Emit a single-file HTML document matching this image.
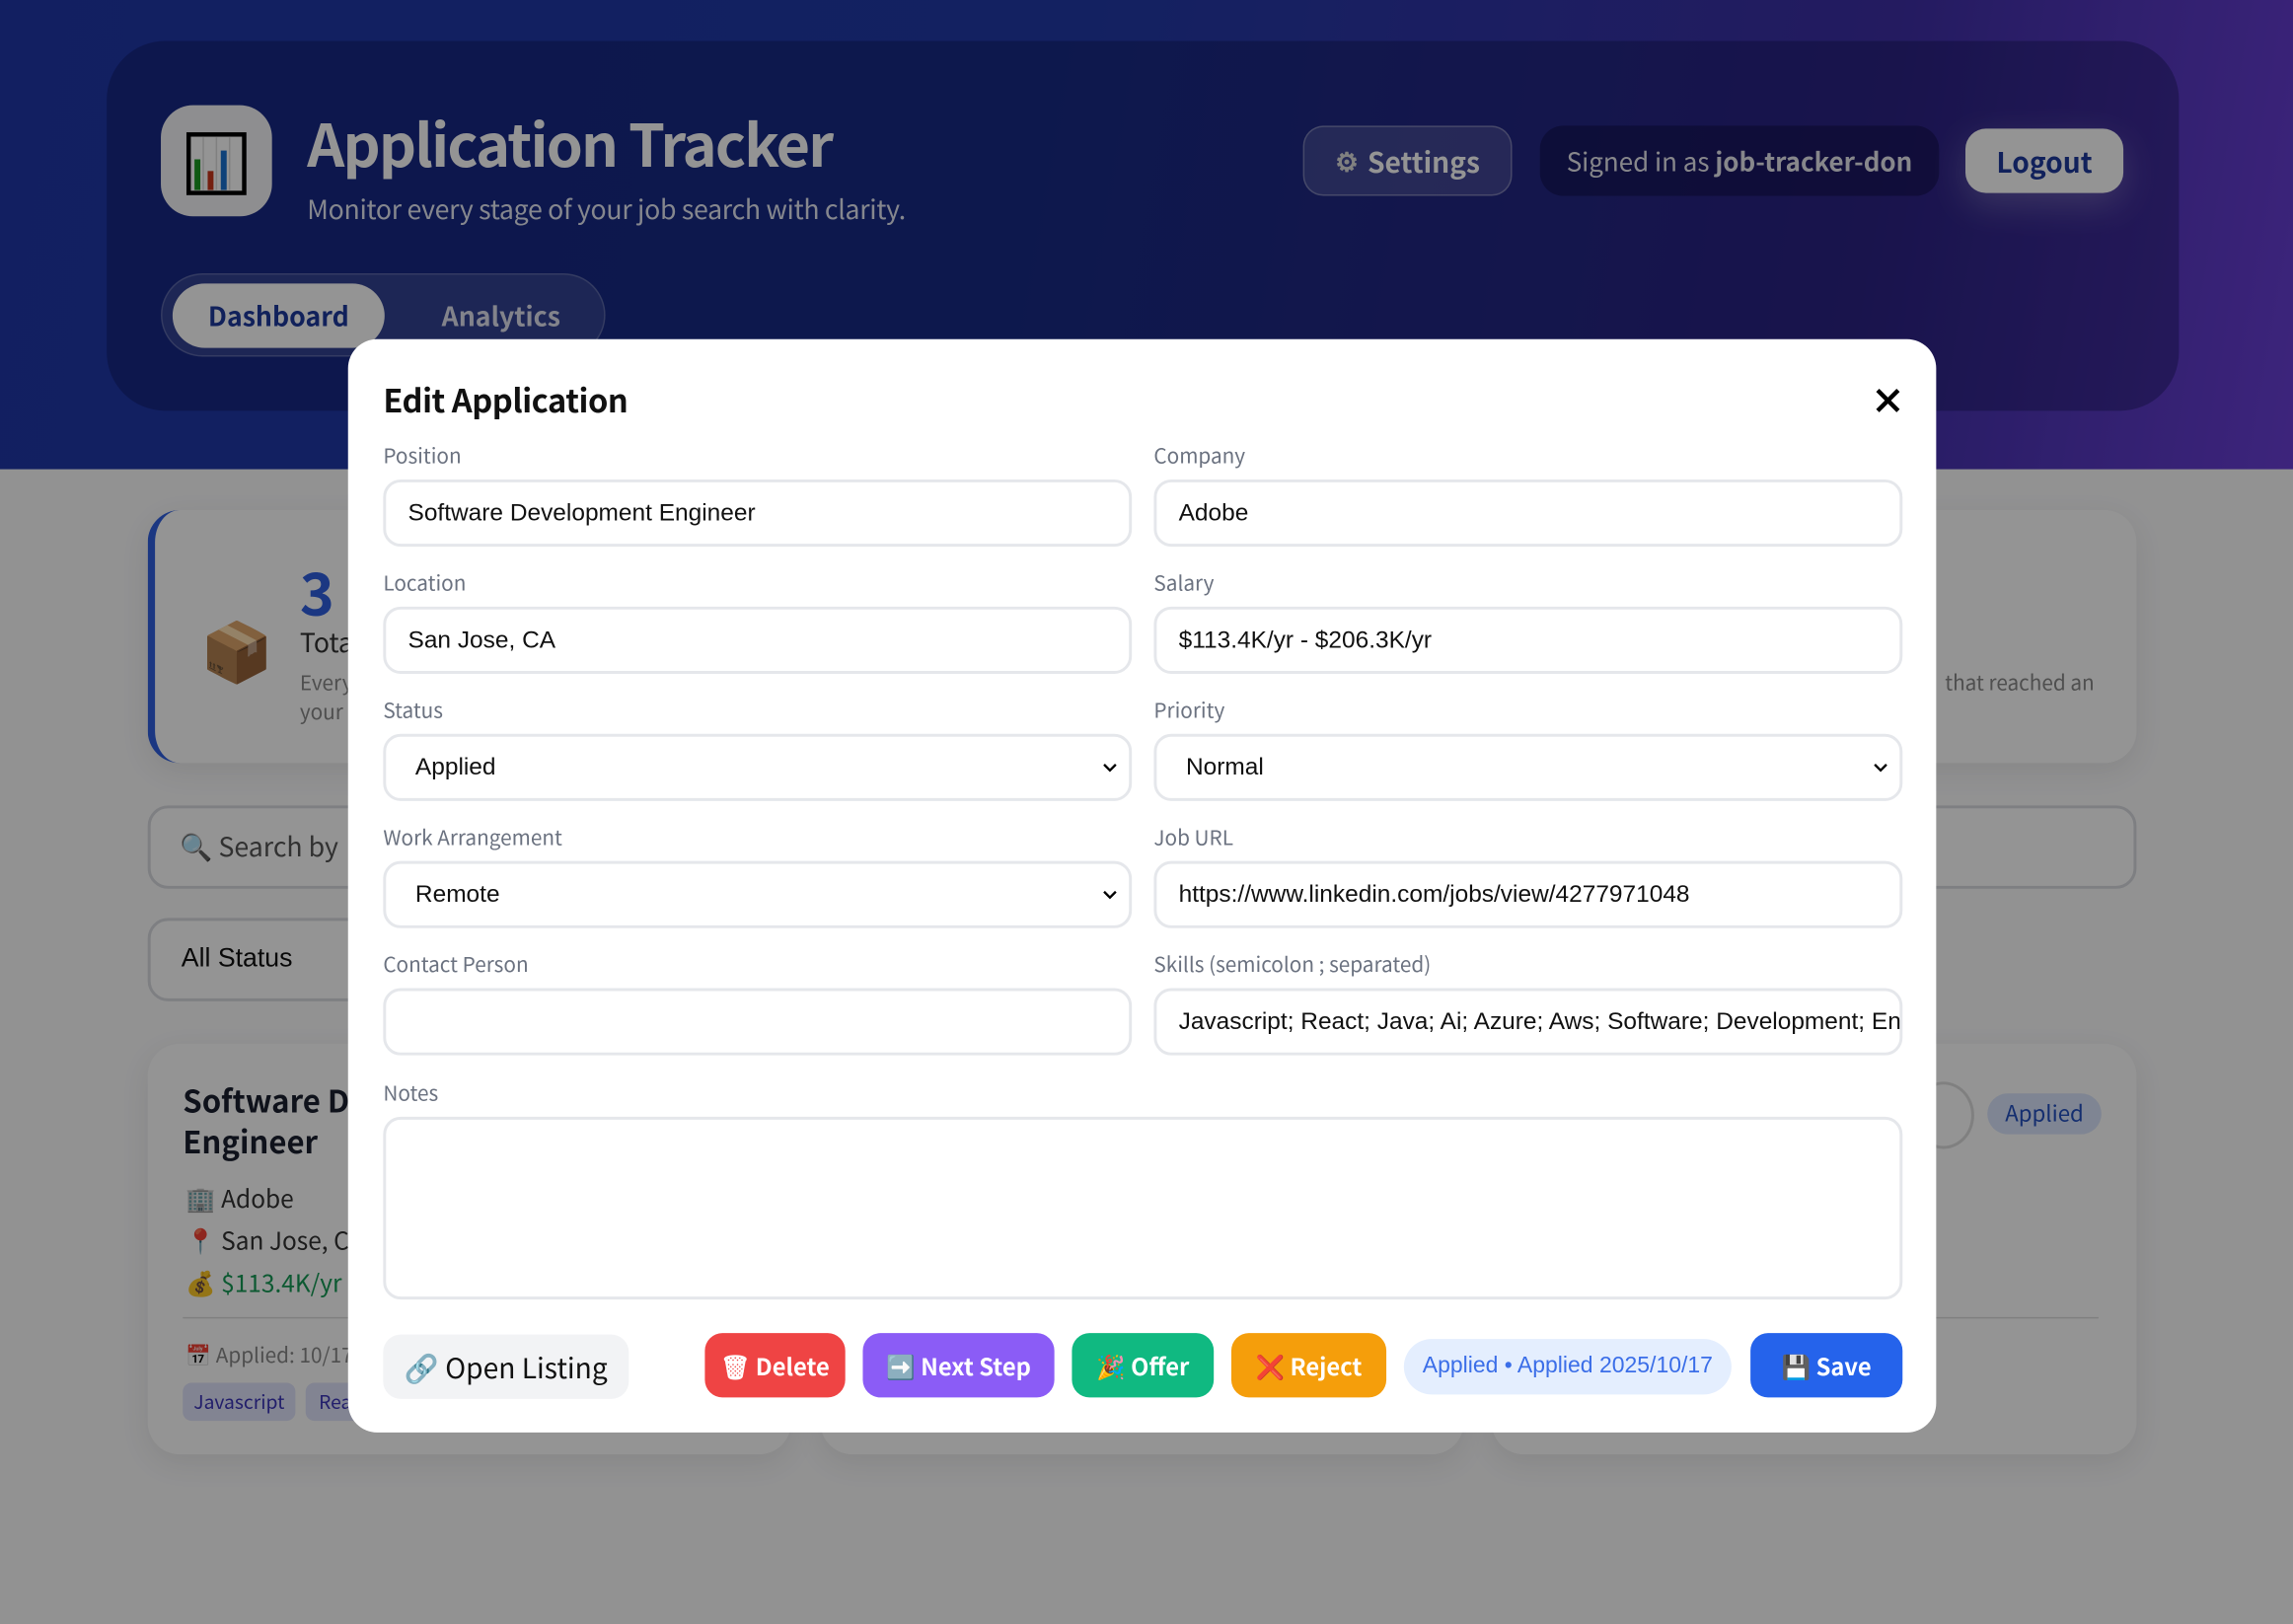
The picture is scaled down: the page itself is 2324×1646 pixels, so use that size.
<!DOCTYPE html>
<html><head><meta charset="utf-8">
<style>
*{box-sizing:border-box;margin:0;padding:0}
html,body{width:2324px;height:1646px;overflow:hidden;background:#fafafa}
#s{position:absolute;left:0;top:0;width:1568px;height:1111px;transform:scale(1.48214,1.48155);transform-origin:0 0;font-family:"Noto Sans CJK JP","Liberation Sans",sans-serif;background:#fbfbfc}
.a{position:absolute}
.band{left:0;top:0;width:1568px;height:321px;background:linear-gradient(100deg,#1f36a8 0%,#213aa8 45%,#3e2fa6 80%,#6a3fd6 100%)}
.hcard{left:73px;top:28px;width:1417px;height:253px;border-radius:40px;background:rgba(10,15,70,0.35)}
.logo{left:110px;top:72px;width:76px;height:76px;border-radius:22px;background:#f4f5f8}
.card{background:#fff;border-radius:22px;box-shadow:0 6px 20px rgba(0,0,0,.08)}
.ov{left:0;top:0;width:1568px;height:1111px;background:rgba(0,0,0,0.42)}
.modal{left:238px;top:232px;width:1086px;height:748px;background:#fff;border-radius:20px}
.lbl{font-size:14px;color:#6b7280}
.in{height:46px;border:2px solid #e5e7eb;border-radius:12px;font-family:"Liberation Sans",sans-serif;font-size:16.5px;color:#111;padding:0 0 0 15px;line-height:42px;white-space:nowrap;overflow:hidden;background:#fff}
.sel{padding-left:20px}
.chev{position:absolute;right:6px;top:14px;width:14px;height:14px}
.btn{height:44px;border-radius:12px;color:#fff;font-size:16px;font-weight:700;display:flex;align-items:center;justify-content:center;gap:5px}
</style></head><body><div id="s">
<div class="a band"></div>
<div class="a hcard"></div>
<div class="a logo"><svg width="76" height="76"><rect x="19" y="20" width="38" height="40" fill="#fff" stroke="#000" stroke-width="3"/><line x1="29" y1="22" x2="29" y2="58" stroke="#ddd"/><line x1="38" y1="22" x2="38" y2="58" stroke="#ddd"/><line x1="47" y1="22" x2="47" y2="58" stroke="#ddd"/><rect x="23" y="37" width="4" height="21" fill="#1a9a22"/><rect x="32" y="45" width="4" height="13" fill="#c8361c"/><rect x="41" y="31" width="4" height="27" fill="#1970d0"/></svg></div>
<div class="a" style="left:210px;top:68px;font-size:40px;font-weight:700;color:#fff;letter-spacing:-1.2px">Application Tracker</div>
<div class="a" style="left:210px;top:130px;font-size:18px;color:#e6e8f5;letter-spacing:-0.2px">Monitor every stage of your job search with clarity.</div>
<div class="a" style="left:891px;top:86px;width:143px;height:48px;border-radius:14px;background:rgba(255,255,255,.15);border:1px solid rgba(255,255,255,.3);color:#fff;font-size:19px;font-weight:700;display:flex;align-items:center;justify-content:center;gap:6px"><span style="font-size:18px;color:#ddd">⚙</span>Settings</div>
<div class="a" style="left:1053px;top:86px;width:273px;height:48px;border-radius:16px;background:rgba(10,12,60,.45);color:#e8e8f0;font-size:17.5px;display:flex;align-items:center;justify-content:center">Signed in as&nbsp;<b>job-tracker-don</b></div>
<div class="a" style="left:1344px;top:88px;width:108px;height:44px;border-radius:14px;background:#fff;color:#1e3a9e;font-size:19px;font-weight:700;display:flex;align-items:center;justify-content:center;box-shadow:0 8px 24px rgba(255,255,255,.25)">Logout</div>
<div class="a" style="left:110px;top:187px;width:304px;height:57px;border-radius:30px;background:rgba(255,255,255,.12);border:1px solid rgba(255,255,255,.2)"></div>
<div class="a" style="left:118px;top:194px;width:145px;height:44px;border-radius:24px;background:#fff;color:#1e3a9e;font-size:18px;font-weight:700;display:flex;align-items:center;justify-content:center">Dashboard</div>
<div class="a" style="left:302px;top:203px;font-size:18px;font-weight:700;color:#e0e2f0">Analytics</div>

<div class="a card" style="left:101px;top:349px;width:440px;height:173px;border-left:5px solid #2f5fe0"></div>
<div class="a card" style="left:1020px;top:349px;width:441px;height:173px"></div>
<div class="a" style="left:137px;top:414px;font-size:40px">📦</div>
<div class="a" style="left:205px;top:375px;font-size:40px;font-weight:700;color:#2f5fe0">3</div>
<div class="a" style="left:205px;top:426px;font-size:18px;color:#333">Total</div>
<div class="a" style="left:205px;top:457px;font-size:14px;color:#888;line-height:20px">Every<br>your</div>
<div class="a" style="left:1330px;top:457px;font-size:14px;color:#888">that reached an</div>
<div class="a" style="left:101px;top:551px;width:1360px;height:57px;border:2px solid #d9dbe0;border-radius:14px;background:#fff"></div>
<div class="a" style="left:123px;top:566px;font-size:18px;color:#555">🔍 Search by</div>
<div class="a" style="left:101px;top:628px;width:200px;height:57px;border:2px solid #d9dbe0;border-radius:14px;background:#fff"></div>
<div class="a" style="left:124px;top:645px;font-family:'Liberation Sans',sans-serif;font-size:18px;color:#111">All Status</div>
<div class="a card" style="left:101px;top:714px;width:440px;height:281px"></div>
<div class="a card" style="left:561px;top:714px;width:440px;height:281px"></div>
<div class="a card" style="left:1020px;top:714px;width:441px;height:281px"></div>
<div class="a" style="left:125px;top:739px;font-size:21px;font-weight:700;color:#1a2030;line-height:28px">Software Development<br>Engineer</div>
<div class="a" style="left:127px;top:805px;font-size:16.5px;color:#333;line-height:29px">🏢 Adobe<br>📍 San Jose, CA<br><span style="color:#159a55">💰 $113.4K/yr -</span></div>
<div class="a" style="left:125px;top:901px;width:1310px;height:1px;background:#ddd"></div>
<div class="a" style="left:127px;top:917px;font-size:14px;color:#888">📅 Applied: 10/17</div>
<div class="a" style="left:125px;top:946px;width:77px;height:26px;border-radius:6px;background:#e0e4fb;color:#3b35b8;font-size:13px;text-align:center;line-height:26px">Javascript</div>
<div class="a" style="left:209px;top:946px;width:77px;height:26px;border-radius:6px;background:#e0e4fb;color:#3b35b8;font-size:13px;padding-left:9px;line-height:26px">React</div>
<div class="a" style="left:1308px;top:740px;width:42px;height:46px;border-radius:50%;border:2px solid #ddd;background:#fff"></div>
<div class="a" style="left:1359px;top:748px;width:78px;height:28px;border-radius:14px;background:#dbe5fd;color:#2450c0;font-size:15px;text-align:center;line-height:28px">Applied</div>

<div class="a ov"></div>

<div class="a modal">
 <div class="a" style="left:24px;top:25px;font-size:22px;font-weight:700;color:#111;letter-spacing:-0.3px">Edit Application</div>
 <svg class="a" style="left:1044px;top:33px" width="18" height="18"><path d="M2 2L16 16M16 2L2 16" stroke="#000" stroke-width="3"/></svg>

 <div class="a lbl" style="left:24px;top:70px">Position</div>
 <div class="a lbl" style="left:551px;top:70px">Company</div>
 <div class="a in" style="left:24px;top:96px;width:512px">Software Development Engineer</div>
 <div class="a in" style="left:551px;top:96px;width:512px">Adobe</div>

 <div class="a lbl" style="left:24px;top:157px">Location</div>
 <div class="a lbl" style="left:551px;top:157px">Salary</div>
 <div class="a in" style="left:24px;top:183px;width:512px">San Jose, CA</div>
 <div class="a in" style="left:551px;top:183px;width:512px">$113.4K/yr - $206.3K/yr</div>

 <div class="a lbl" style="left:24px;top:244px">Status</div>
 <div class="a lbl" style="left:551px;top:244px">Priority</div>
 <div class="a in sel" style="left:24px;top:270px;width:512px">Applied<svg class="chev" viewBox="0 0 14 14"><path d="M3 5l4 4 4-4" stroke="#000" stroke-width="1.6" fill="none"/></svg></div>
 <div class="a in sel" style="left:551px;top:270px;width:512px">Normal<svg class="chev" viewBox="0 0 14 14"><path d="M3 5l4 4 4-4" stroke="#000" stroke-width="1.6" fill="none"/></svg></div>

 <div class="a lbl" style="left:24px;top:331px">Work Arrangement</div>
 <div class="a lbl" style="left:551px;top:331px">Job URL</div>
 <div class="a in sel" style="left:24px;top:357px;width:512px">Remote<svg class="chev" viewBox="0 0 14 14"><path d="M3 5l4 4 4-4" stroke="#000" stroke-width="1.6" fill="none"/></svg></div>
 <div class="a in" style="left:551px;top:357px;width:512px">https://www.linkedin.com/jobs/view/4277971048</div>

 <div class="a lbl" style="left:24px;top:418px">Contact Person</div>
 <div class="a lbl" style="left:551px;top:418px">Skills (semicolon ; separated)</div>
 <div class="a in" style="left:24px;top:444px;width:512px"></div>
 <div class="a in" style="left:551px;top:444px;width:512px;padding-right:14px">Javascript; React; Java; Ai; Azure; Aws; Software; Development; Eng</div>

 <div class="a lbl" style="left:24px;top:506px">Notes</div>
 <div class="a in" style="left:24px;top:532px;width:1039px;height:125px"></div>

 <div class="a btn" style="left:24px;top:681px;width:168px;background:#f2f3f5;color:#111;font-weight:400;font-size:19px;gap:8px">🔗 Open Listing</div>
 <div class="a btn" style="left:244px;top:680px;width:96px;background:#ef4444">🗑 Delete</div>
 <div class="a btn" style="left:352px;top:680px;width:131px;background:#8b5cf6">➡️ Next Step</div>
 <div class="a btn" style="left:495px;top:680px;width:97px;background:#10b981">🎉 Offer</div>
 <div class="a btn" style="left:604px;top:680px;width:106px;background:#f59e0b">❌ Reject</div>
 <div class="a" style="left:722px;top:684px;width:224px;height:38px;border-radius:19px;background:#e4eefe;color:#3b6ee8;font-family:'Liberation Sans',sans-serif;font-size:15.5px;text-align:center;line-height:38px">Applied • Applied 2025/10/17</div>
 <div class="a btn" style="left:959px;top:680px;width:104px;background:#2563eb">💾 Save</div>
</div>
</div></body></html>
